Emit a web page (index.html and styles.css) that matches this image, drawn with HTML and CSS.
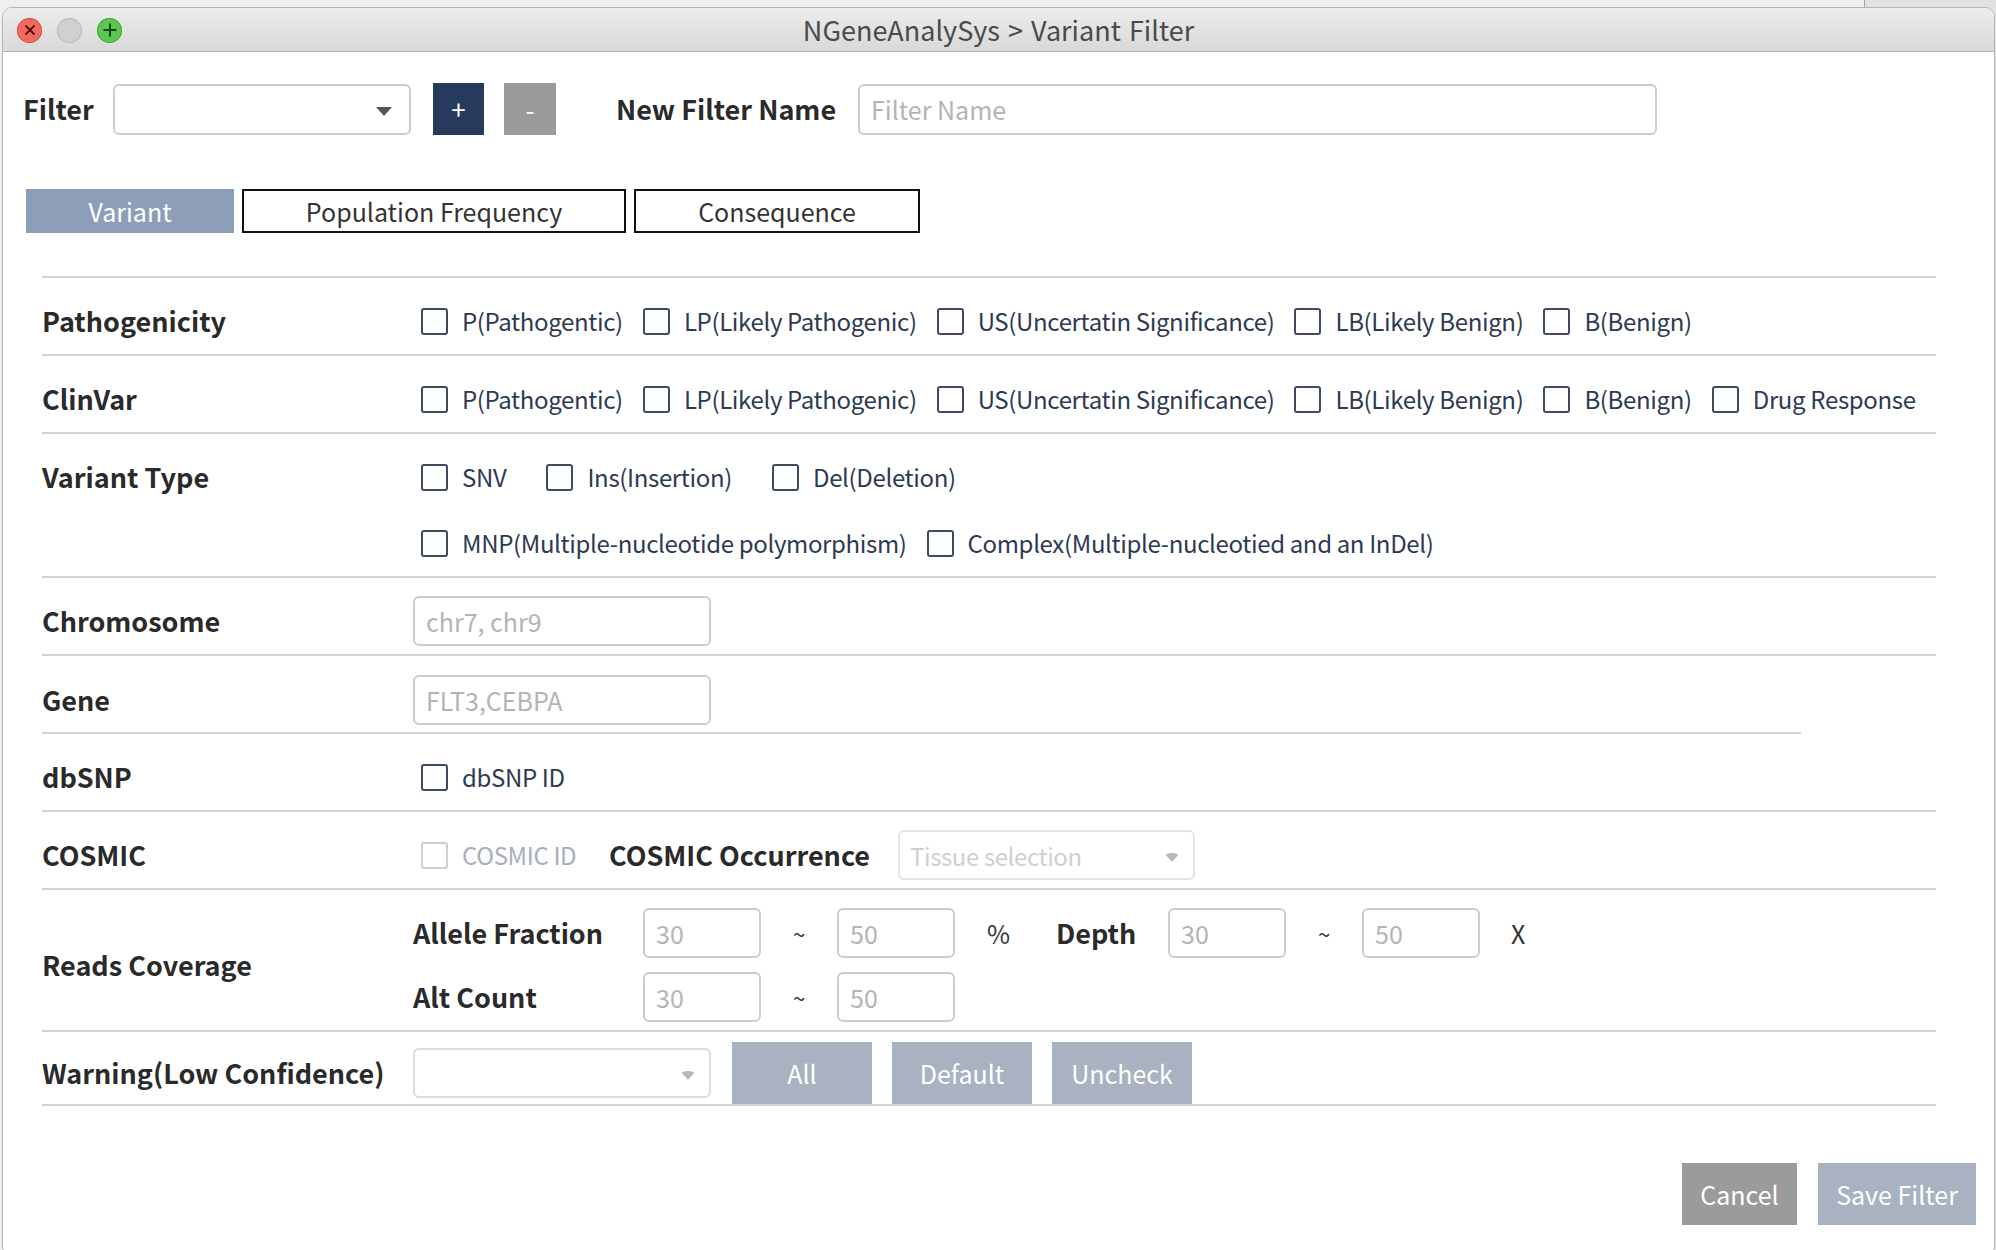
FILE: index.html
```html
<!DOCTYPE html>
<html lang="en">
<head>
<meta charset="utf-8">
<title>NGeneAnalySys &gt; Variant Filter</title>
<link rel="stylesheet" href="styles.css">
</head>
<body>
<div class="window">
  <div class="titlebar">
    <div class="lights">
      <span class="light close"><svg width="24" height="24" viewBox="0 0 24 24"><path d="M7.5 7.5 L16.5 16.5 M16.5 7.5 L7.5 16.5" stroke="#5a0d08" stroke-width="1.8" fill="none"/></svg></span>
      <span class="light min"></span>
      <span class="light max"><svg width="24" height="24" viewBox="0 0 24 24"><path d="M12 5.5 V18.5 M5.5 12 H18.5" stroke="#0f4d0c" stroke-width="2" fill="none"/></svg></span>
    </div>
    <div class="title">NGeneAnalySys &gt; Variant Filter</div>
    <div></div>
  </div>

  <div class="content">
    <div class="filter-row">
      <span class="lbl filter-lbl">Filter</span>
      <div class="select filter-select"><span class="caret"></span></div>
      <button class="sq plus">+</button>
      <button class="sq minus">-</button>
      <span class="lbl newname-lbl">New Filter Name</span>
      <input class="field name-field" type="text" placeholder="Filter Name">
    </div>

    <div class="tabs">
      <div class="tab active tab-variant">Variant</div>
      <div class="tab tab-pop">Population Frequency</div>
      <div class="tab tab-cons">Consequence</div>
    </div>

    <div class="form">
      <div class="row">
        <div class="lbl rlabel">Pathogenicity</div>
        <div class="checks">
          <label class="ck"><span class="cb"></span>P(Pathogentic)</label>
          <label class="ck"><span class="cb"></span>LP(Likely Pathogenic)</label>
          <label class="ck"><span class="cb"></span>US(Uncertatin Significance)</label>
          <label class="ck"><span class="cb"></span>LB(Likely Benign)</label>
          <label class="ck"><span class="cb"></span>B(Benign)</label>
        </div>
      </div>

      <div class="row">
        <div class="lbl rlabel">ClinVar</div>
        <div class="checks">
          <label class="ck"><span class="cb"></span>P(Pathogentic)</label>
          <label class="ck"><span class="cb"></span>LP(Likely Pathogenic)</label>
          <label class="ck"><span class="cb"></span>US(Uncertatin Significance)</label>
          <label class="ck"><span class="cb"></span>LB(Likely Benign)</label>
          <label class="ck"><span class="cb"></span>B(Benign)</label>
          <label class="ck"><span class="cb"></span>Drug Response</label>
        </div>
      </div>

      <div class="row row-tall">
        <div class="lbl rlabel line">Variant Type</div>
        <div class="vt">
          <div class="checks line wide">
            <label class="ck"><span class="cb"></span>SNV</label>
            <label class="ck"><span class="cb"></span>Ins(Insertion)</label>
            <label class="ck"><span class="cb"></span>Del(Deletion)</label>
          </div>
          <div class="checks line">
            <label class="ck"><span class="cb"></span>MNP(Multiple-nucleotide polymorphism)</label>
            <label class="ck"><span class="cb"></span>Complex(Multiple-nucleotied and an InDel)</label>
          </div>
        </div>
      </div>

      <div class="row">
        <div class="lbl rlabel">Chromosome</div>
        <input class="field mid-field" type="text" placeholder="chr7, chr9">
      </div>

      <div class="row row-short-line">
        <div class="lbl rlabel">Gene</div>
        <input class="field mid-field" type="text" placeholder="FLT3,CEBPA">
      </div>

      <div class="row">
        <div class="lbl rlabel">dbSNP</div>
        <div class="checks">
          <label class="ck"><span class="cb"></span>dbSNP ID</label>
        </div>
      </div>

      <div class="row">
        <div class="lbl rlabel">COSMIC</div>
        <div class="checks">
          <label class="ck disabled cosmic-id"><span class="cb"></span>COSMIC ID</label>
        </div>
        <span class="lbl occ-lbl">COSMIC Occurrence</span>
        <div class="select tissue-select"><span class="ph">Tissue selection</span><span class="caret light"></span></div>
      </div>

      <div class="row row-reads">
        <div class="lbl rlabel">Reads Coverage</div>
        <div class="reads">
          <div class="rline">
            <span class="lbl sublbl">Allele Fraction</span>
            <input class="field num" type="text" placeholder="30">
            <span class="tilde">~</span>
            <input class="field num" type="text" placeholder="50">
            <span class="unit pct">%</span>
            <span class="lbl depth-lbl">Depth</span>
            <input class="field num" type="text" placeholder="30">
            <span class="tilde">~</span>
            <input class="field num" type="text" placeholder="50">
            <span class="unit x">X</span>
          </div>
          <div class="rline">
            <span class="lbl sublbl">Alt Count</span>
            <input class="field num" type="text" placeholder="30">
            <span class="tilde">~</span>
            <input class="field num" type="text" placeholder="50">
          </div>
        </div>
      </div>

      <div class="row row-warn">
        <div class="lbl rlabel">Warning(Low Confidence)</div>
        <div class="select warn-select"><span class="caret light"></span></div>
        <div class="warn-btns">
          <button class="flat">All</button>
          <button class="flat">Default</button>
          <button class="flat">Uncheck</button>
        </div>
      </div>
    </div>

    <div class="footer">
      <button class="flat cancel">Cancel</button>
      <button class="flat save">Save Filter</button>
    </div>
  </div>
</div>
</body>
</html>
```

FILE: styles.css
```css
* { box-sizing: border-box; }

html, body { margin: 0; padding: 0; }

body {
  width: 1996px;
  height: 1250px;
  overflow: hidden;
  background: linear-gradient(to right, #efefef 0, #efefef 1864px, #a3a3a3 1864px, #a3a3a3 1865px, #e2e2e2 1865px);
  font-family: "Noto Sans CJK KR", "Source Sans Pro", "Noto Sans", sans-serif;
  color: #2b2b2b;
}

.window {
  margin: 7px 0 0 2px;
  width: 1993px;
  height: 1250px;
  background: #ffffff;
  border: 1px solid #b5b5b5;
  border-radius: 10px;
  overflow: hidden;
}

/* ---------- title bar ---------- */
.titlebar {
  height: 44px;
  display: grid;
  grid-template-columns: 1fr auto 1fr;
  align-items: center;
  background: linear-gradient(#ececec, #d9d9d9);
  border-bottom: 1px solid #b4b4b4;
}

.lights {
  display: flex;
  gap: 15px;
  padding-left: 14px;
}

.light {
  width: 25px;
  height: 25px;
  border-radius: 50%;
  display: flex;
  align-items: center;
  justify-content: center;
}
.light svg { display: block; }
.light.close { background: #ef6b60; box-shadow: inset 0 0 0 1px #d9534a; }
.light.min { background: #d0d0d0; box-shadow: inset 0 0 0 1px #b8b8b8; }
.light.max { background: #5fc552; box-shadow: inset 0 0 0 1px #45a83a; }

.title {
  font-size: 27px;
  color: #4a4a4a;
  line-height: 44px;
  word-spacing: 2px;
}

/* ---------- content ---------- */
.content {
  padding: 31px 0 0 20px;
}

.lbl {
  font-weight: 700;
  font-size: 27px;
  color: #2a2a2a;
  line-height: 34px;
  white-space: nowrap;
}

.filter-row {
  display: flex;
  align-items: center;
  height: 52px;
}

.filter-lbl { width: 90px; }

.select {
  position: relative;
  height: 51px;
  border: 2px solid #cdcdcd;
  border-radius: 6px;
  background: #fff;
  display: flex;
  align-items: center;
}

.caret {
  position: absolute;
  top: 21px;
  right: 17px;
  width: 0;
  height: 0;
  border-left: 8px solid transparent;
  border-right: 8px solid transparent;
  border-top: 9px solid #555;
}
.caret.light { border-top-color: #b8b8b8; right: 13px; }

.filter-select { width: 298px; margin-right: 22px; }

.sq {
  width: 51px;
  height: 52px;
  border: none;
  padding: 0;
  color: #fff;
  font-family: inherit;
  font-size: 26px;
  line-height: 52px;
}
.plus { background: #263a5c; margin-right: 20px; }
.minus { background: #9b9b9b; width: 52px; margin-right: 60px; }

.newname-lbl { width: 242px; }

.field {
  font-family: inherit;
  font-size: 25px;
  color: #333;
  border: 2px solid #cdcdcd;
  border-radius: 6px;
  background: #fff;
  padding: 0 11px;
  outline: none;
}
.field::placeholder { color: #b4b4b4; }

.name-field { width: 799px; height: 51px; }

/* ---------- tabs ---------- */
.tabs {
  display: flex;
  gap: 8px;
  margin: 54px 0 0 3px;
}

.tab {
  height: 44px;
  font-size: 25px;
  line-height: 40px;
  text-align: center;
  color: #333;
  border: 2px solid #111;
  background: #fff;
}
.tab.active { background: #8d9eb9; border-color: #8d9eb9; color: #fff; }
.tab-variant { width: 208px; }
.tab-pop { width: 384px; }
.tab-cons { width: 286px; }

/* ---------- form rows ---------- */
.form {
  margin: 43px 0 0 19px;
  width: 1894px;
  border-top: 2px solid #d4d4d4;
}

.row {
  display: flex;
  align-items: center;
  height: 78px;
  padding-top: 10px;
  border-bottom: 2px solid #d4d4d4;
}

.row-short-line {
  border-bottom: none;
  background: linear-gradient(#d4d4d4, #d4d4d4) left bottom / 1759px 2px no-repeat;
}

.rlabel { width: 371px; flex: none; }

.checks {
  display: flex;
  align-items: center;
  padding-left: 8px;
}

.ck {
  display: flex;
  align-items: center;
  gap: 14px;
  margin-right: 20px;
  font-size: 24px;
  letter-spacing: -0.35px;
  line-height: 34px;
  color: #2d3a52;
  white-space: nowrap;
}

.cb {
  width: 27px;
  height: 27px;
  border: 2px solid #3f4b60;
  border-radius: 3px;
  background: #fff;
  flex: none;
}

.ck.disabled { color: #a9afb9; }
.ck.disabled .cb { border-color: #cfcfcf; }
.cosmic-id { width: 188px; margin-right: 0; }

.occ-lbl { width: 289px; }

.tissue-select {
  width: 297px;
  height: 50px;
  border-color: #e4e4e4;
  padding-left: 10px;
}
.ph { font-size: 24px; letter-spacing: -0.4px; color: #cfcfcf; }

/* variant type */
.row-tall {
  height: 144px;
  align-items: flex-start;
}
.row-tall .line { height: 66px; display: flex; align-items: center; }
.vt { display: flex; flex-direction: column; }
.checks.wide .ck { margin-right: 40px; }

/* chromosome / gene */
.mid-field { width: 298px; height: 50px; }

/* reads coverage */
.row-reads { height: 142px; }
.reads { display: flex; flex-direction: column; gap: 14px; }
.rline { display: flex; align-items: center; height: 50px; }
.sublbl { width: 230px; }
.num { width: 118px; height: 50px; padding: 0 11px; font-size: 25px; }
.tilde { width: 76px; text-align: center; font-size: 22px; color: #333; }
.unit { font-size: 25px; color: #333; }
.pct { width: 69px; margin-left: 32px; }
.depth-lbl { width: 112px; }
.x { margin-left: 31px; }

/* warning */
.row-warn { height: 74px; }
.warn-select { width: 298px; height: 50px; border-color: #dcdcdc; }
.warn-btns {
  display: flex;
  gap: 20px;
  margin-left: 21px;
  align-self: stretch;
}

.flat {
  border: none;
  padding: 0;
  font-family: inherit;
  font-size: 25px;
  color: #fff;
  background: #a9b2c0;
  width: 140px;
  height: 62px;
}

/* footer */
.footer {
  display: flex;
  justify-content: flex-end;
  gap: 21px;
  margin-top: 57px;
  padding-right: 18px;
}
.cancel { background: #9b9b9b; width: 115px; }
.save { width: 158px; }
```
